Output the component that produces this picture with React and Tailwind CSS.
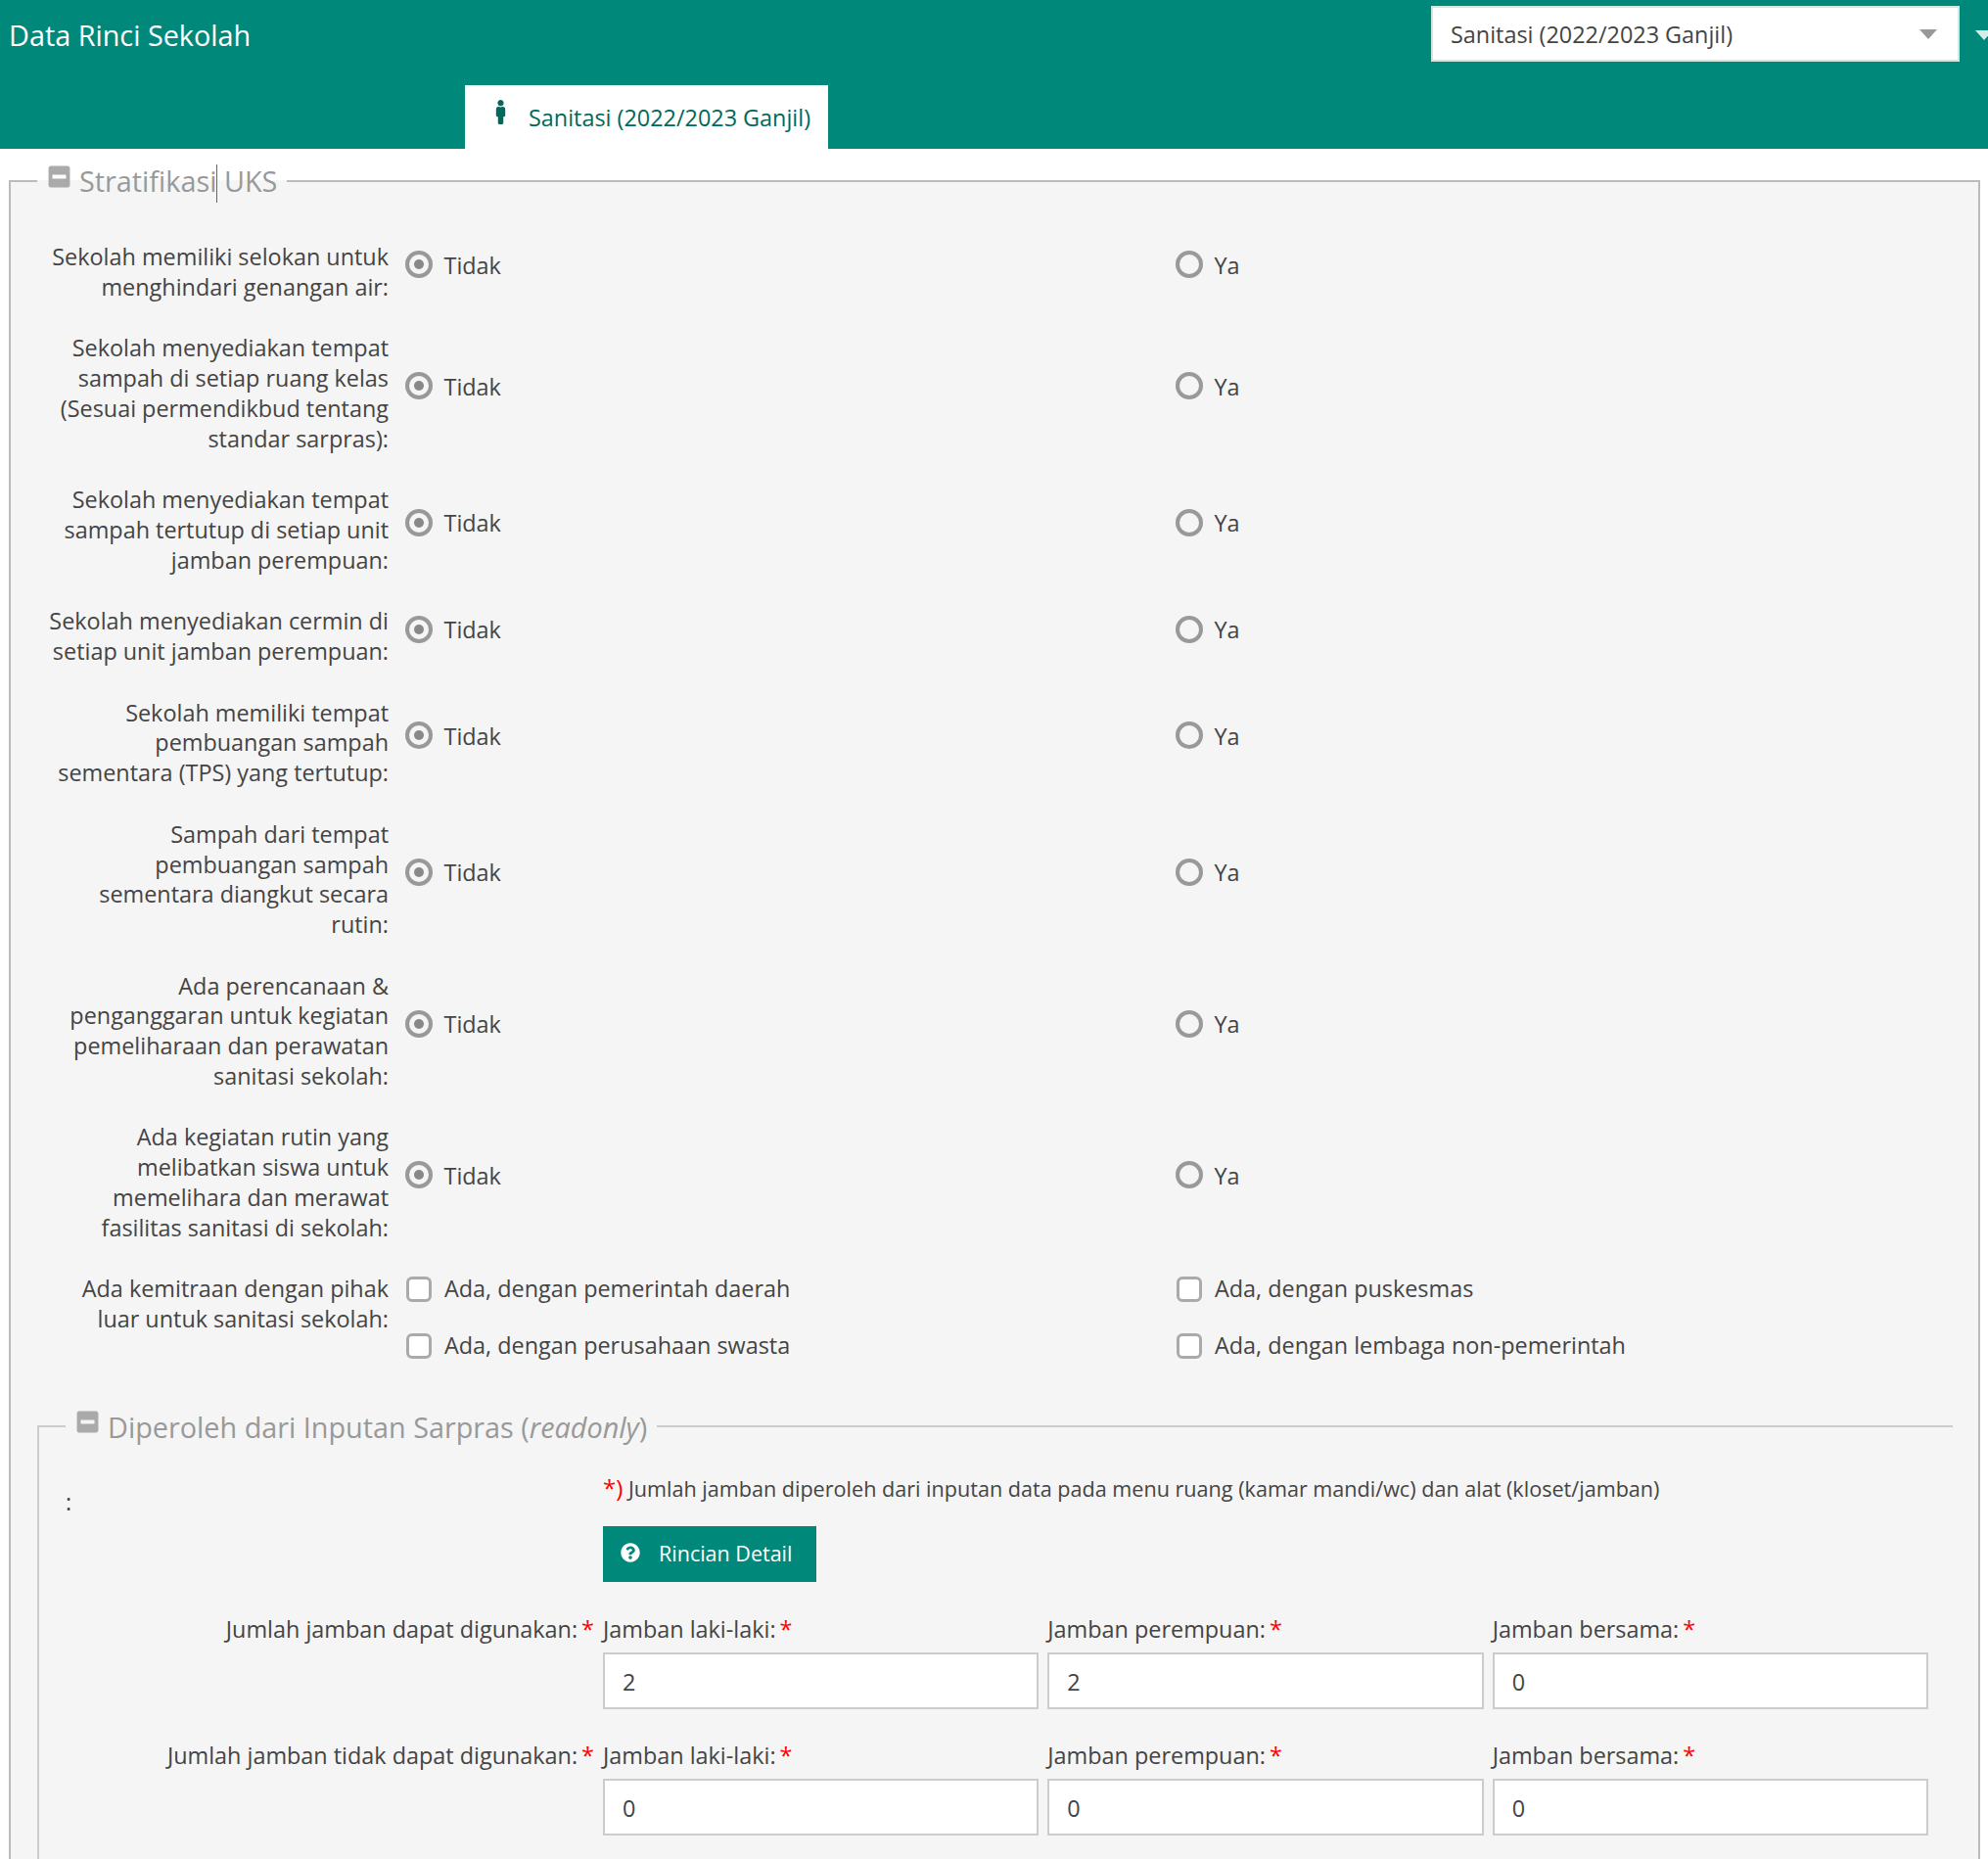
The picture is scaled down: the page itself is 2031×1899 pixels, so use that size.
import React from 'react';
import { FaMale, FaMinusSquare, FaQuestionCircle } from 'react-icons/fa';

const radioRows = [
  'Sekolah memiliki selokan untuk menghindari genangan air:',
  'Sekolah menyediakan tempat sampah di setiap ruang kelas (Sesuai permendikbud tentang standar sarpras):',
  'Sekolah menyediakan tempat sampah tertutup di setiap unit jamban perempuan:',
  'Sekolah menyediakan cermin di setiap unit jamban perempuan:',
  'Sekolah memiliki tempat pembuangan sampah sementara (TPS) yang tertutup:',
  'Sampah dari tempat pembuangan sampah sementara diangkut secara rutin:',
  'Ada perencanaan & penganggaran untuk kegiatan pemeliharaan dan perawatan sanitasi sekolah:',
  'Ada kegiatan rutin yang melibatkan siswa untuk memelihara dan merawat fasilitas sanitasi di sekolah:',
];

const toilets = [
  { label: 'Jumlah jamban dapat digunakan:', values: ['2', '2', '0'] },
  { label: 'Jumlah jamban tidak dapat digunakan:', values: ['0', '0', '0'] },
];

const fields = ['Jamban laki-laki:', 'Jamban perempuan:', 'Jamban bersama:'];

const Star = () => <span className="ml-[4px] text-[#f00]">*</span>;

const Radio = ({ label, checked }) => (
  <div className="flex items-center">
    <span className="ml-[1px] flex h-[28px] w-[28px] items-center justify-center rounded-full border-4 border-[#999] bg-[#f5f5f5]">
      {checked && <span className="h-[10px] w-[10px] rounded-full bg-[#888]"></span>}
    </span>
    <span className="ml-[11.5px] translate-y-[1px]">{label}</span>
  </div>
);

const Check = ({ label }) => (
  <div className="flex h-[25px] items-center">
    <span className="ml-[2px] h-[26px] w-[26px] shrink-0 rounded-[6px] border-[3px] border-[#aaa] bg-white"></span>
    <span className="ml-[13px]">{label}</span>
  </div>
);

const Legend = ({ children, className }) => (
  <legend className={`flex h-[40px] items-center px-[10px] text-[28.8px] leading-[40px] text-[#999] ${className}`}>
    <FaMinusSquare className="mb-[10px] mr-[8px] text-[25px] text-[#aaa]" />
    <span className="translate-y-[1px]">{children}</span>
  </legend>
);

export default function App() {
  return (
    <div className="h-[1899px] overflow-hidden bg-white font-['Open_Sans',sans-serif] text-[23.4px] leading-[30.7px] text-[#444]">
      <header className="h-[152px] overflow-hidden bg-[#00897b]">
        <div className="flex h-[87px] items-start justify-between pl-[9px] pt-[6px]">
          <h1 className="mt-[10px] text-[28.8px] leading-[40px] text-white">Data Rinci Sekolah</h1>
          <div className="mr-[-5px] flex">
            <div className="flex h-[57px] w-[540px] items-center justify-between border-2 border-[#cfe8e4] bg-white pl-[18px] pr-[21px]">
              <span className="translate-y-[1px]">Sanitasi (2022/2023 Ganjil)</span>
              <span className="mt-[1px] h-0 w-0 border-x-[9px] border-t-[10px] border-x-transparent border-t-[#999]"></span>
            </div>
            <span className="ml-[16px] mt-[25px] h-0 w-0 border-x-[9px] border-t-[10px] border-x-transparent border-t-[#d5ece9]"></span>
          </div>
        </div>
        <div className="ml-[475px] flex h-[65px] w-[371px] items-center bg-white pl-[24px] text-[#00695c]">
          <FaMale className="mb-[10px] text-[25px]" />
          <span className="ml-[16px] translate-y-[1px]">Sanitasi (2022/2023 Ganjil)</span>
        </div>
      </header>

      <fieldset className="ml-[9px] mr-[8px] mt-[13px] min-h-[1800px] border-2 border-[#bbb] bg-[#f5f5f5]">
        <Legend className="ml-[27px]">
          Stratifikasi
          <span className="mx-[-0.5px] inline-block h-[39px] w-[1px] bg-[#666] align-middle"></span>
          {' '}UKS
        </Legend>

        <div className="pt-[42px]">
          {radioRows.map((text, i) => (
            <div key={i} className="mb-[32px] grid grid-cols-[402px_787px_1fr] items-center">
              <label className="ml-auto mr-[16px] w-[360px] text-right">{text}</label>
              <div className="pb-[15px]"><Radio label="Tidak" checked /></div>
              <div className="pb-[15px]"><Radio label="Ya" /></div>
            </div>
          ))}

          <div className="grid grid-cols-[402px_787px_1fr] items-start">
            <label className="ml-auto mr-[16px] w-[360px] text-right">Ada kemitraan dengan pihak luar untuk sanitasi sekolah:</label>
            <div className="flex flex-col gap-y-[33px] pt-[3px]">
              <Check label="Ada, dengan pemerintah daerah" />
              <Check label="Ada, dengan perusahaan swasta" />
            </div>
            <div className="flex flex-col gap-y-[33px] pt-[3px]">
              <Check label="Ada, dengan puskesmas" />
              <Check label="Ada, dengan lembaga non-pemerintah" />
            </div>
          </div>
        </div>

        <fieldset className="ml-[27px] mr-[26px] mt-[50px] min-h-[500px] border-2 border-r-0 border-[#ccc]">
          <Legend className="ml-[27px]">
            Diperoleh dari Inputan Sarpras (<i>readonly</i>)
          </Legend>

          <div className="grid grid-cols-[576px_1fr] pt-[24px]">
            <div className="pl-[27px] pt-[18px]">:</div>
            <div>
              <p className="text-[21.6px] leading-[38px]">
                <span className="text-[24px] text-[#f00]">*)</span> Jumlah jamban diperoleh dari inputan data pada menu ruang (kamar mandi/wc) dan alat (kloset/jamban)
              </p>
              <button className="mt-[19px] flex h-[57px] w-[218px] items-center bg-[#00897b] pl-[18px] text-[21.5px] text-white">
                <FaQuestionCircle className="mb-[3px] text-[20px]" />
                <span className="ml-[19px]">Rincian Detail</span>
              </button>
            </div>
          </div>

          <div className="pt-[33px]">
            {toilets.map((row) => (
              <div key={row.label} className="mb-[32.5px] grid grid-cols-[576px_1354px]">
                <label className="pr-[9px] text-right">{row.label}<Star /></label>
                <div className="grid grid-cols-3 gap-x-[9px]">
                  {fields.map((field, i) => (
                    <div key={field}>
                      <label className="mb-[8px] block">{field}<Star /></label>
                      <input
                        readOnly
                        value={row.values[i]}
                        className="h-[58px] w-full border-2 border-[#ccc] bg-white pl-[18px] pt-[2px] text-[#444] outline-none"
                      />
                    </div>
                  ))}
                </div>
              </div>
            ))}
          </div>
        </fieldset>
      </fieldset>
    </div>
  );
}
